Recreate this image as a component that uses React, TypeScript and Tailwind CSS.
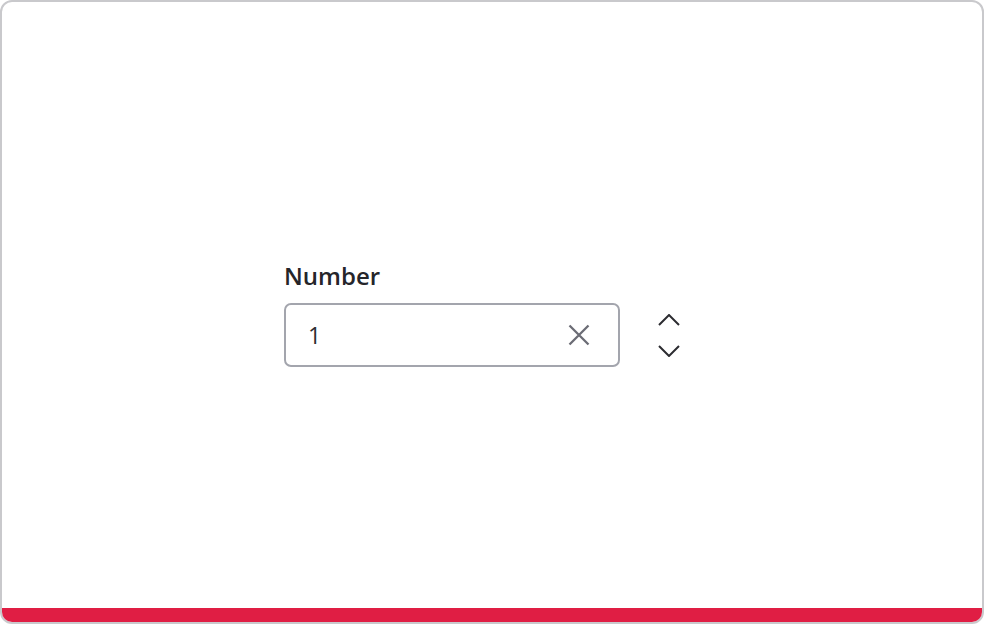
import { useState } from "react";

export default function App() {
  const [value, setValue] = useState("1");

  return (
    <div className="w-[984px] h-[624px] bg-white" style={{ fontFamily: '"Open Sans", "Noto Sans", sans-serif' }}>
      <div className="h-full border-2 border-[#c9c9cc] rounded-[12px] overflow-hidden flex flex-col">
        <div className="flex-1 flex items-center justify-center pr-[20px]">
          <div className="flex flex-col gap-[11px] mt-[17px]">
            <label className="text-[24px] font-semibold text-[#25252a] leading-[32px]">Number</label>
            <div className="flex items-center gap-[38px]">
              <div className="w-[336px] h-[64px] border-2 border-[#a3a5ad] rounded-[7px] flex items-center pl-[22px] pr-[28px]">
                <input
                  value={value}
                  onChange={(e) => setValue(e.target.value)}
                  className="flex-1 min-w-0 w-full outline-none text-[23px] text-[#2c2c31] bg-transparent"
                />
                <button onClick={() => setValue("")} className="shrink-0 text-[#6b6c75]">
                  <svg width="22" height="22" viewBox="0 0 22 22" fill="none" stroke="currentColor" strokeWidth="2.3">
                    <path d="M1.5 1.5 L20.5 20.5 M20.5 1.5 L1.5 20.5" />
                  </svg>
                </button>
              </div>
              <div className="flex flex-col gap-[19px] text-[#2c2c31]">
                <button onClick={() => setValue(String((Number(value) || 0) + 1))}>
                  <svg width="22" height="12" viewBox="0 0 22 12" fill="none" stroke="currentColor" strokeWidth="2">
                    <path d="M1 11 L11 1 L21 11" />
                  </svg>
                </button>
                <button onClick={() => setValue(String((Number(value) || 0) - 1))}>
                  <svg width="22" height="12" viewBox="0 0 22 12" fill="none" stroke="currentColor" strokeWidth="2">
                    <path d="M1 1 L11 11 L21 1" />
                  </svg>
                </button>
              </div>
            </div>
          </div>
        </div>
        <div className="h-[14px] bg-[#e01e44]" />
      </div>
    </div>
  );
}
